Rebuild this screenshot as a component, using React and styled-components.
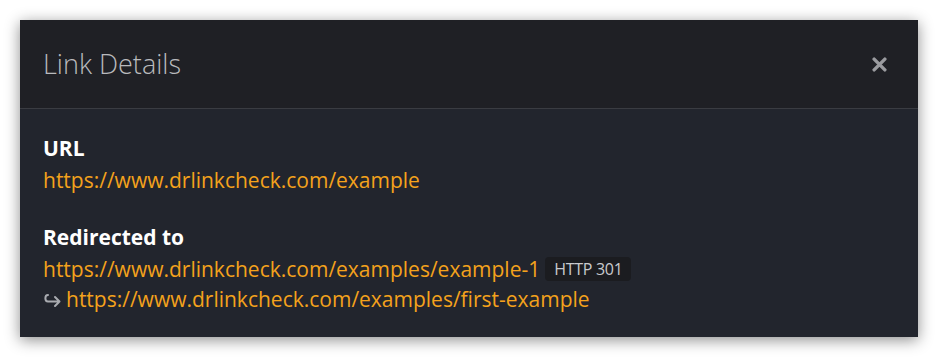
import React from 'react';
import styled, { createGlobalStyle } from 'styled-components';

const Global = createGlobalStyle`
  html, body { margin: 0; padding: 0; background: #fff; }
  body { font-family: "Open Sans", "DejaVu Sans", sans-serif; }
`;

const Page = styled.div`
  padding: 20px;
  width: 898px;
`;

const Modal = styled.div`
  width: 898px;
  background: #22252d;
  box-shadow: 0 3px 14px rgba(0, 0, 0, 0.45);
`;

const Header = styled.div`
  height: 89px;
  box-sizing: border-box;
  padding: 0 29px 0 23px;
  display: flex;
  align-items: center;
  justify-content: space-between;
  background: #1f2025;
  border-bottom: 1px solid #3a3c42;
`;

const Title = styled.h4`
  margin: 0;
  font-size: 27px;
  font-weight: 300;
  color: #b9babd;
  position: relative;
  top: -1px;
`;

const Close = styled.button`
  border: 0;
  background: none;
  padding: 0;
  width: 20px;
  height: 20px;
  display: flex;
  align-items: center;
  justify-content: center;
  cursor: pointer;
`;

const Body = styled.div`
  padding: 22px 23px 23px;
`;

const Section = styled.div`
  & + & { margin-top: 25px; }
`;

const Label = styled.div`
  font-size: 21px;
  font-weight: 700;
  color: #fff;
  line-height: 34px;
`;

const Line = styled.div`
  display: flex;
  align-items: center;
  gap: ${p => p.$gap || 6}px;
  font-size: 21px;
  line-height: 30px;
`;

const Link = styled.a`
  color: #f4a21c;
  text-decoration: none;
`;

const Badge = styled.span`
  font-size: 16px;
  color: #c9cacd;
  background: #1b1c20;
  border-radius: 4px;
  padding: 0 9px;
  line-height: 24px;
  letter-spacing: -0.3px;
`;

const Arrow = styled.svg`
  flex: none;
  width: 18px;
  height: 15px;
  margin-top: 2px;
`;

function CloseIcon() {
  return (
    <svg width="15" height="15" viewBox="0 0 14 14">
      <path d="M2 2 L12 12 M12 2 L2 12" stroke="#9a9b9f" strokeWidth="3.2" strokeLinecap="round" />
    </svg>
  );
}

function HookArrow() {
  return (
    <Arrow viewBox="0 0 18 15">
      <path
        d="M5 2 C1.5 2 1.5 8.5 5 8.5 L16.5 8.5 M12 4 L16.5 8.5 L12 13"
        fill="none"
        stroke="#a9abb0"
        strokeWidth="2"
        strokeLinecap="round"
        strokeLinejoin="round"
      />
    </Arrow>
  );
}

export default function App() {
  return (
    <>
      <Global />
      <Page>
        <Modal>
          <Header>
            <Title>Link Details</Title>
            <Close aria-label="Close"><CloseIcon /></Close>
          </Header>
          <Body>
            <Section>
              <Label>URL</Label>
              <Line><Link href="#">https://www.drlinkcheck.com/example</Link></Line>
            </Section>
            <Section>
              <Label>Redirected to</Label>
              <Line $gap={5}>
                <Link href="#">https://www.drlinkcheck.com/examples/example-1</Link>
                <Badge>HTTP 301</Badge>
              </Line>
              <Line $gap={5}>
                <HookArrow />
                <Link href="#">https://www.drlinkcheck.com/examples/first-example</Link>
              </Line>
            </Section>
          </Body>
        </Modal>
      </Page>
    </>
  );
}
